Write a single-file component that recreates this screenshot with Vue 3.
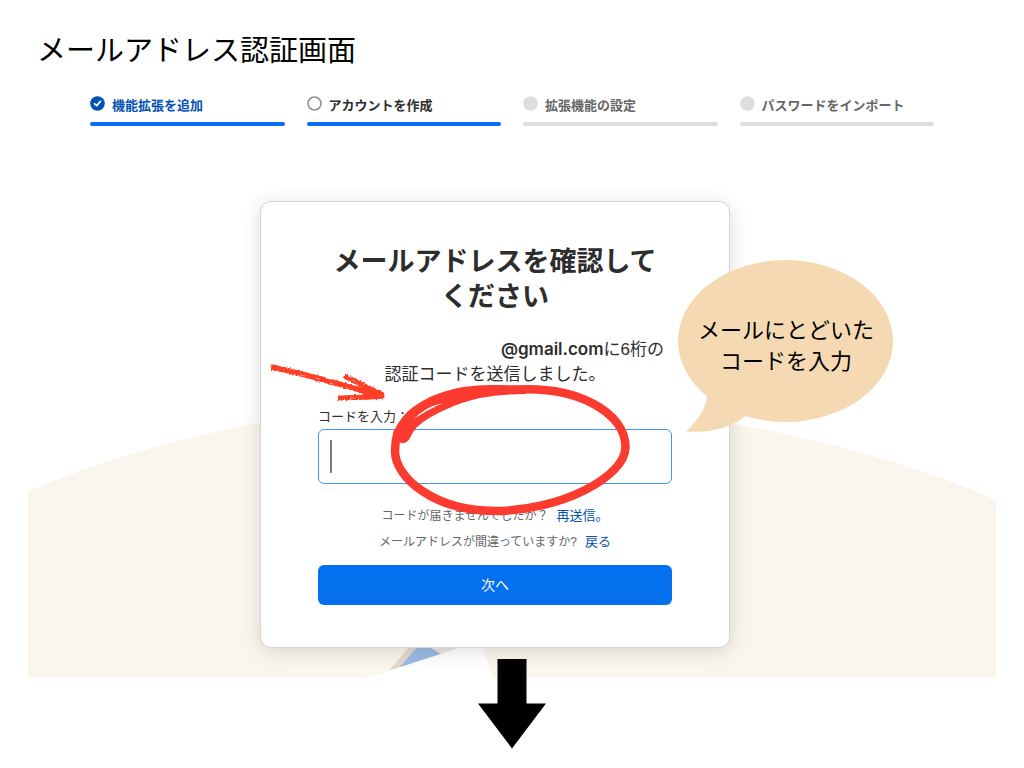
<script setup>
import { ref } from 'vue'

const code = ref('')
const steps = [
  { label: '機能拡張を追加', state: 'done' },
  { label: 'アカウントを作成', state: 'current' },
  { label: '拡張機能の設定', state: 'todo' },
  { label: 'パスワードをインポート', state: 'todo' },
]
</script>

<template>
  <main class="page">
    <h1 class="title">メールアドレス認証画面</h1>

    <ol class="steps">
      <li v-for="step in steps" :key="step.label" class="step" :class="step.state">
        <svg class="dot" viewBox="0 0 15 15" aria-hidden="true">
          <circle v-if="step.state === 'current'" cx="7.5" cy="7.5" r="6.5" fill="#fff" stroke="#8f8f8f" stroke-width="1.6" />
          <circle v-else cx="7.5" cy="7.5" r="7.3" fill="currentColor" />
          <path v-if="step.state === 'done'" d="M4.6 7.8 L6.7 9.7 L10.4 5.4" fill="none" stroke="#fff" stroke-width="1.8" stroke-linecap="round" stroke-linejoin="round" />
        </svg>
        <span class="step-label">{{ step.label }}</span>
      </li>
    </ol>

    <section class="scene">
      <svg class="hill" viewBox="28 400 968 278" preserveAspectRatio="none" aria-hidden="true">
        <path d="M28 491 C168 433 325 402 490 402 C655 402 845 434 996 500 V678 H28 Z" fill="#faf6ee" />
        <path d="M389 670 L412 644 H470 L440 662 Z" fill="#eee5da" />
        <path d="M389 671 L412 644 H422 L400 668 Z" fill="#e2d8cb" />
        <path d="M399 668 L420 644 L424 644 L441 654 Z" fill="#9bbce6" />
        <path d="M366 678 L441 654 L470 644 H482 L493 678 Z" fill="#fff" />
      </svg>

      <div class="card">
        <h2 class="heading">メールアドレスを確認して<br />ください</h2>
        <p class="message">
          <span class="recipient"><strong>@gmail.com</strong>に6桁の</span>
          <span class="sent">認証コードを送信しました。</span>
        </p>
        <form @submit.prevent>
          <label class="label" for="code">コードを入力：</label>
          <div class="field">
            <input id="code" v-model="code" class="input" type="text" inputmode="numeric" />
            <span class="caret"></span>
          </div>
          <p class="hint first">コードが届きませんでしたか？<a href="#resend">再送信。</a></p>
          <p class="hint">メールアドレスが間違っていますか?<a href="#back">戻る</a></p>
          <button class="submit" type="submit">次へ</button>
        </form>

        <svg class="pointer" viewBox="266 360 124 46" aria-hidden="true">
          <defs>
            <filter id="chalk" x="-10%" y="-20%" width="120%" height="140%">
              <feTurbulence type="fractalNoise" baseFrequency="0.5" numOctaves="2" seed="4" result="noise" />
              <feDisplacementMap in="SourceGraphic" in2="noise" scale="3" xChannelSelector="R" yChannelSelector="G" />
            </filter>
          </defs>
          <g filter="url(#chalk)" fill="none" stroke="#ff4127" stroke-linecap="butt">
            <path d="M271 367 C302 373 336 383 374 394" stroke-width="5.5" />
            <path d="M344 376 C356 382 368 387 383 395" stroke-width="5" />
            <path d="M338 398 C352 397 368 398 384 396" stroke-width="5" />
            <path d="M362 389 L384 396 L366 396 Z" stroke-width="4" fill="#ff4127" />
          </g>
          <path d="M300 375 l5 1 M316 378 l4 1 M330 383 l3 1 M350 398 l4 0 M352 380 l3 1.5" stroke="#fff" stroke-width="0.8" opacity="0.6" />
        </svg>

        <svg class="ring" viewBox="388 380 248 140" aria-hidden="true">
          <path d="M512 390 C578 385 625.500 413 625.500 447 C625.500 477 560 511 495 511 C435 511 395 478 395 451 Q395 441 398 431" fill="none" stroke="#fb3b30" stroke-width="8.500" />
          <path d="M393 434 Q396 424 407 412 Q416 404 430 397 Q446 390 463 387 Q480 384.500 497 385 Q512 385 526 386 L526 394 Q502 394 480 398 Q462 402 447 409 Q428 417 417 427 Q412 433 410 438 Q407 444 401 443 Q399 442 399 439 L395 440 Z" fill="#fb3b30" />
          <path d="M414 419 Q425 407 443 403 Q427 410 414 419 Z" fill="#fff" />
        </svg>

        <div class="bubble">
          <svg class="bubble-shape" viewBox="678 260 216 173" aria-hidden="true">
            <ellipse cx="785.5" cy="341" rx="107.5" ry="81" fill="#f5d9b3" />
            <path d="M707 394 Q707 412 686 431.500 Q725 434 748 414 Z" fill="#f5d9b3" />
          </svg>
          <p class="bubble-text">メールにとどいた<br />コードを入力</p>
        </div>
      </div>
    </section>

    <svg class="next-arrow" viewBox="478 659 68 90" aria-hidden="true">
      <path d="M497.500 659 H526.500 V703.500 H546 L512 748.500 L478 703.500 H497.500 Z" fill="#000" />
    </svg>
  </main>
</template>

<style>
body {
  margin: 0;
  background: #fff;
}
</style>

<style scoped>
.page {
  box-sizing: border-box;
  padding: 31px 28px 16px;
  font-family: "Liberation Sans", "Noto Sans CJK JP", sans-serif;
  color: #2d2d2d;
}
.title {
  margin: 0;
  padding-left: 9px;
  font-size: 29px;
  font-weight: 400;
  line-height: 40px;
  color: #000;
}
.steps {
  display: grid;
  grid-template-columns: repeat(4, 1fr);
  gap: 22px;
  max-width: 844px;
  margin: 25px auto 0;
  padding: 0;
  list-style: none;
}
.step {
  position: relative;
  display: flex;
  align-items: flex-start;
  gap: 7px;
  padding-bottom: 10px;
  color: #dedede;
}
.step::after {
  content: "";
  position: absolute;
  inset: auto 0 0;
  height: 4px;
  border-radius: 2px;
  background: #dedede;
}
.step.done {
  color: #0550b4;
}
.step.done::after,
.step.current::after {
  background: #0570ee;
}
.dot {
  flex: none;
  width: 15px;
  height: 15px;
}
.step-label {
  font-size: 13px;
  font-weight: 700;
  line-height: 20px;
  color: #666;
}
.done .step-label {
  color: #0550b4;
}
.current .step-label {
  color: #2d2d2d;
}
.scene {
  position: relative;
  display: flex;
  justify-content: center;
  margin-top: 75px;
  padding: 0 34px 30px 0;
}
.hill {
  position: absolute;
  left: 0;
  bottom: 0;
  width: 100%;
  height: 278px;
}
.card {
  position: relative;
  box-sizing: border-box;
  width: 100%;
  max-width: 470px;
  padding: 43px 57px 42px;
  border: 1px solid #d5d5d5;
  border-radius: 11px;
  background: #fff;
  box-shadow: 0 3px 20px rgba(0, 0, 0, 0.14);
}
.heading {
  margin: 0;
  font-size: 27px;
  font-weight: 700;
  line-height: 35px;
  text-align: center;
}
.message {
  margin: 22px 0 0;
  font-size: 17px;
  line-height: 25px;
}
.message span {
  display: block;
}
.recipient {
  padding-right: 8px;
  text-align: right;
}
.recipient strong {
  font-family: Inter, sans-serif;
  font-weight: 600;
}
.sent {
  text-align: center;
}
.label {
  display: block;
  margin-top: 20px;
  font-size: 13px;
  line-height: 20px;
}
.field {
  position: relative;
  margin-top: 2px;
}
.input {
  display: block;
  box-sizing: border-box;
  width: 100%;
  height: 55px;
  padding: 0 12px;
  border: 1px solid #4693f1;
  border-radius: 6px;
  outline: none;
  background: #fff;
  font: inherit;
  font-size: 24px;
}
.caret {
  position: absolute;
  top: 11px;
  left: 12px;
  width: 2px;
  height: 33px;
  background: #7c7c7c;
}
.hint {
  margin: 0;
  font-size: 12px;
  line-height: 26px;
  text-align: center;
  color: #666;
}
.hint.first {
  margin-top: 19px;
}
.hint a {
  margin-left: 8px;
  font-size: 13px;
  color: #0550b4;
  text-decoration: none;
}
.submit {
  display: block;
  width: 100%;
  height: 40px;
  margin-top: 10px;
  padding: 0 0 3px;
  border: 0;
  border-radius: 6px;
  background: #0570ee;
  font: inherit;
  font-size: 14px;
  color: #fff;
}
.pointer,
.ring,
.bubble {
  position: absolute;
}
.pointer {
  top: 158px;
  left: 5px;
  width: 124px;
  height: 46px;
}
.ring {
  top: 178px;
  left: 127px;
  width: 248px;
  height: 140px;
  pointer-events: none;
}
.bubble {
  top: 58px;
  left: 417px;
  width: 216px;
  height: 173px;
}
.bubble-shape {
  display: block;
  width: 100%;
}
.bubble-text {
  position: absolute;
  inset: 55px 0 auto;
  margin: 0;
  font-size: 22px;
  line-height: 31px;
  text-align: center;
  white-space: nowrap;
  color: #000;
}
.next-arrow {
  position: relative;
  display: block;
  width: 68px;
  height: 90px;
  margin: -19px auto 0;
}
</style>
